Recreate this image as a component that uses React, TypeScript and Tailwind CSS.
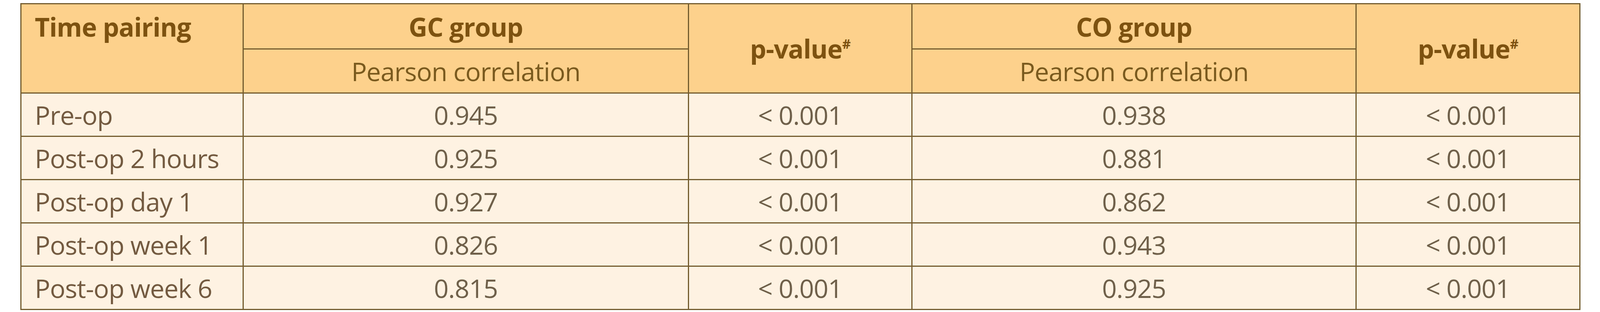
const rows = [
  ["Pre-op", "0.945", "< 0.001", "0.938", "< 0.001"],
  ["Post-op 2 hours", "0.925", "< 0.001", "0.881", "< 0.001"],
  ["Post-op day 1", "0.927", "< 0.001", "0.862", "< 0.001"],
  ["Post-op week 1", "0.826", "< 0.001", "0.943", "< 0.001"],
  ["Post-op week 6", "0.815", "< 0.001", "0.925", "< 0.001"],
];

const cell = "border-[3px] border-[#735c2e]";

function PValue() {
  return (
    <th
      rowSpan={2}
      className={`${cell} bg-[#fdd18c] text-center align-middle font-bold text-[#7d5210]`}
    >
      p-value
      <sup className="text-[34px] top-[-0.74em]">#</sup>
    </th>
  );
}

export default function App() {
  return (
    <div className="min-h-[800px] w-[4140px] bg-white pl-[52px] pt-[8px] font-['Open_Sans',sans-serif] text-[66px] leading-[90px] tracking-[-1px]">
      <table className="border-collapse table-fixed w-[3991px]">
        <colgroup>
          <col className="w-[569px]" />
          <col className="w-[1140px]" />
          <col className="w-[572px]" />
          <col className="w-[1137px]" />
          <col className="w-[573px]" />
        </colgroup>
        <thead>
          <tr className="h-[116px]">
            <th
              rowSpan={2}
              className={`${cell} bg-[#fdd18c] pl-[34px] pt-[12px] text-left align-top font-bold text-[#7d5210]`}
            >
              Time pairing
            </th>
            <th className={`${cell} bg-[#fdd18c] pt-[12px] text-center align-top font-bold text-[#7d5210]`}>
              GC group
            </th>
            <PValue />
            <th className={`${cell} bg-[#fdd18c] pt-[12px] text-center align-top font-bold text-[#7d5210]`}>
              CO group
            </th>
            <PValue />
          </tr>
          <tr className="h-[113px]">
            <th className={`${cell} bg-[#fdd18c] text-center align-middle font-normal text-[#7a5a1e]`}>
              Pearson correlation
            </th>
            <th className={`${cell} bg-[#fdd18c] text-center align-middle font-normal text-[#7a5a1e]`}>
              Pearson correlation
            </th>
          </tr>
        </thead>
        <tbody>
          {rows.map((r) => (
            <tr key={r[0]} className="h-[111px] bg-[#fef2e2] text-[#6f604a]">
              <td className={`${cell} pl-[34px] align-middle text-[#735a40]`}>{r[0]}</td>
              {r.slice(1).map((v, i) => (
                <td key={i} className={`${cell} text-center align-middle`}>
                  {v}
                </td>
              ))}
            </tr>
          ))}
        </tbody>
      </table>
    </div>
  );
}
